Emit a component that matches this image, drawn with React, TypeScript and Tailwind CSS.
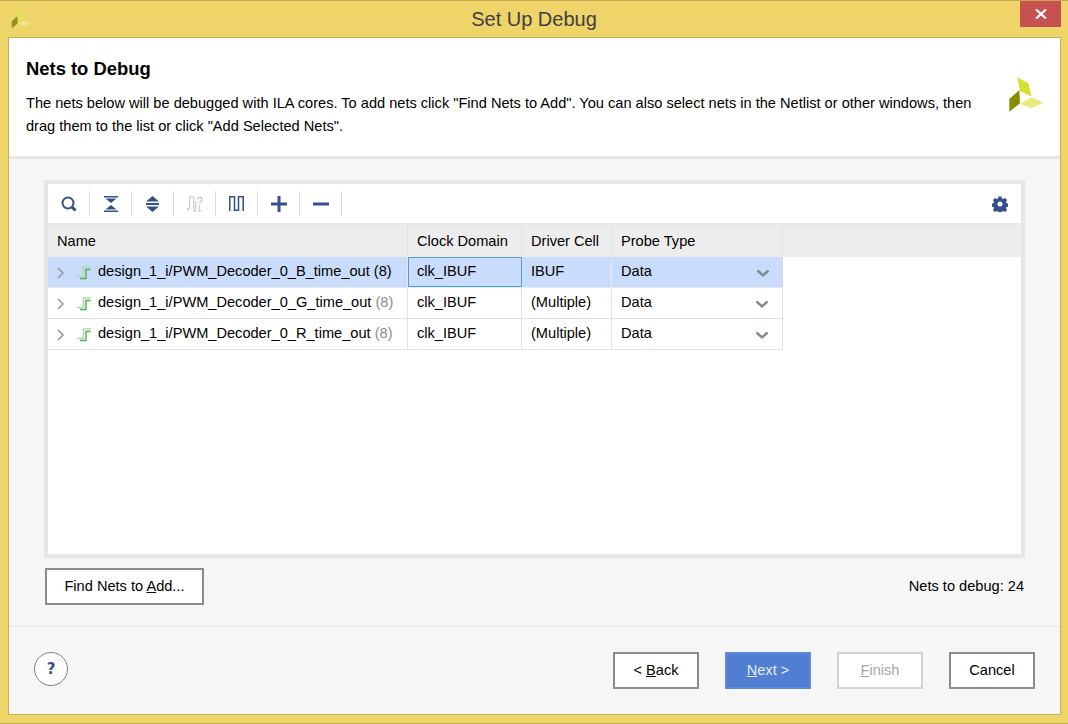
import React from "react";

const Sep = () => <div className="w-px h-[25px] bg-[#dcdcdc]" />;

const Tool = ({ children }: { children: React.ReactNode }) => (
  <div className="w-[41px] h-full flex items-center justify-center">{children}</div>
);

const blue = "#34508c";

const Chevron = () => (
  <svg width="8" height="12" viewBox="0 0 8 12" className="shrink-0 mt-[2px]">
    <path d="M1 1l5 5-5 5" fill="none" stroke="#999999" strokeWidth="1.6" />
  </svg>
);

const NetIcon = () => (
  <svg width="14" height="14" viewBox="0 0 14 14" className="shrink-0 mt-[2px]">
    <path d="M0 10.500h6.500V1H14" fill="none" stroke="#aedba6" strokeWidth="1.600" />
    <path d="M3 12.500h6V3.500h4.500" fill="none" stroke="#4eae55" strokeWidth="1.400" />
  </svg>
);

const Down = () => (
  <svg width="14" height="9" viewBox="0 0 14 9" className="mt-[3px]">
    <path d="M1.500 1.500L7 6.500l5.500-5" fill="none" stroke="#808a94" strokeWidth="2.400" />
  </svg>
);

const Logo = ({ size, fills }: { size: number; fills: [string, string, string] }) => (
  <svg width={size} height={size} viewBox="0 0 36 36">
    <path d="M9.300 0.300L20.300 6.300 23.700 19.700 12 13.700z" fill={fills[0]} />
    <path d="M1.300 22L11.300 13 12 26.300 1.300 34.700z" fill={fills[1]} />
    <path d="M12 27L23.700 20.300 35.300 25.700 23.700 31.300z" fill={fills[2]} />
  </svg>
);

const Btn = ({ children, w, cls }: { children: React.ReactNode; w: string; cls: string }) => (
  <div className={`${w} h-[37px] flex items-center justify-center border-2 ${cls}`}>{children}</div>
);

const rows = [
  { c: "G", d: "(Multiple)" },
  { c: "R", d: "(Multiple)" },
];

export default function App() {
  return (
    <div
      className="w-[1068px] h-[724px] flex flex-col bg-[#eed469] border-t border-b border-[#c4ab52] text-[14.6px] text-black overflow-hidden"
      style={{ fontFamily: '"Liberation Sans", Arial, sans-serif' }}
    >
      <div className="h-[36px] shrink-0 flex relative pl-[11px] pt-[8px]">
        <Logo size={20} fills={["#dfe05e", "#8f9413", "#e9e58c"]} />
        <div className="absolute inset-x-0 top-[5px] text-center text-[20px] leading-[26px] text-[#404040]">Set Up Debug</div>
        <div className="absolute right-[7px] top-0 w-[41px] h-[26px] bg-[#c75050] flex items-center justify-center">
          <svg width="12" height="10" viewBox="0 0 12 10">
            <path d="M1 0.500l10 9M11 0.500l-10 9" stroke="white" strokeWidth="2.200" />
          </svg>
        </div>
      </div>

      <div className="ml-[8px] mr-[7px] mb-[8px] flex-1 flex flex-col border border-[#c9b04f] bg-[#f6f6f6] min-h-0">
        <div className="h-[121px] shrink-0 bg-white border-b-[3px] border-[#e6e6e6] flex pl-[17px] pr-[16px] pt-[20px]">
          <div className="flex-1">
            <div className="font-bold text-[18.4px] leading-[21px]">Nets to Debug</div>
            <div className="mt-[13px] leading-[23px] w-[960px]">
              The nets below will be debugged with ILA cores. To add nets click "Find Nets to Add". You can also select nets in the Netlist or other windows, then drag them to the list or click "Add Selected Nets".
            </div>
          </div>
          <div className="pt-[19px]">
            <Logo size={36} fills={["#d6df2e", "#8a8a00", "#e6ec7c"]} />
          </div>
        </div>

        <div className="flex-1 flex flex-col px-[35px] pt-[21px] min-h-0">
          <div className="h-[378px] w-[981px] border-4 border-[#e6e6e6] bg-white flex flex-col">
            <div className="h-[42px] shrink-0 flex items-center border-b-[3px] border-[#e9e9e9]">
              <div className="w-[41px] h-full flex items-center justify-center">
                <svg width="18" height="18" viewBox="0 0 18 18">
                  <circle cx="8" cy="8" r="5.500" fill="none" stroke={blue} strokeWidth="2" />
                  <path d="M12 12l3.500 3.500" stroke={blue} strokeWidth="3" />
                </svg>
              </div>
              <Sep />
              <Tool>
                <svg width="14" height="16" viewBox="0 0 14 16">
                  <path d="M0 0h14v1.500H0zM0 14.500h14V16H0z" fill={blue} />
                  <path d="M1.500 2.500h11L7 7zM1.500 13.500h11L7 9z" fill={blue} />
                </svg>
              </Tool>
              <Sep />
              <Tool>
                <svg width="13" height="16" viewBox="0 0 13 16">
                  <path d="M6.500 0L13 5.500H0zM6.500 16L13 10.500H0z" fill={blue} />
                  <path d="M0 7h13v2H0z" fill={blue} />
                </svg>
              </Tool>
              <Sep />
              <Tool>
                <svg width="16" height="16" viewBox="0 0 16 16">
                  <path d="M0.700 15V12.500h2V1h4v14" fill="none" stroke="#cfcfcf" strokeWidth="1.300" />
                  <path d="M6.700 15h2V6M11 15h3M12.500 15V9" fill="none" stroke="#cfcfcf" strokeWidth="1.300" />
                  <path d="M10.500 3.500C10.500 0.500 15 0.500 15 3.500c0 2-2.500 2-2.500 3.500" fill="none" stroke="#cfcfcf" strokeWidth="1.500" />
                </svg>
              </Tool>
              <Sep />
              <Tool>
                <svg width="15" height="15" viewBox="0 0 15 15">
                  <path d="M0.800 15V0.800h4.700V14.200h4V0.800h4.700V15" fill="none" stroke={blue} strokeWidth="1.500" />
                </svg>
              </Tool>
              <Sep />
              <Tool>
                <svg width="16" height="16" viewBox="0 0 16 16">
                  <path d="M0 6.500h16v3H0zM6.500 0h3v16h-3z" fill={blue} />
                </svg>
              </Tool>
              <Sep />
              <Tool>
                <svg width="16" height="4" viewBox="0 0 16 4">
                  <path d="M0 0.500h16v3H0z" fill={blue} />
                </svg>
              </Tool>
              <Sep />
              <div className="flex-1" />
              <div className="pr-[13px] flex">
                <svg width="16" height="16" viewBox="0 0 16 16">
                  <path
                    fillRule="evenodd"
                    fill={blue}
                    d="M6.500 0.500h3l0.400 2 1.300 0.600 1.800-1 2 2-1 1.800 0.500 1.300 2 0.400v3l-2 0.400-0.500 1.300 1 1.800-2 2-1.800-1-1.300 0.500-0.400 2h-3l-0.400-2-1.300-0.500-1.800 1-2-2 1-1.800-0.500-1.300-2-0.400v-3l2-0.400 0.500-1.300-1-1.800 2-2 1.800 1 1.300-0.600zM8 5.500a2.500 2.500 0 1 0 0 5 2.500 2.500 0 0 0 0-5z"
                  />
                </svg>
              </div>
            </div>

            <div className="h-[31px] shrink-0 bg-[#ededed] flex leading-[31px]">
              <div className="w-[360px] pl-[9px] h-full border-r border-[#e0e0e0]">Name</div>
              <div className="w-[114px] pl-[9px] h-full border-r border-[#e0e0e0]">Clock Domain</div>
              <div className="w-[90px] pl-[9px] h-full border-r border-[#e0e0e0]">Driver Cell</div>
              <div className="w-[171px] pl-[9px] h-full border-r border-[#e0e0e0]">Probe Type</div>
            </div>

            <div className="w-[735px] flex h-[31px] bg-[#c9dcfb] border-b border-[#e3ebf5] leading-[28px]">
              <div className="w-[360px] h-full flex pl-[9px] items-center border-r border-[#e3ebf5]">
                <Chevron />
                <span className="w-[12px]" />
                <NetIcon />
                <span className="ml-[7px] h-full">design_1_i/PWM_Decoder_0_B_time_out (8)</span>
              </div>
              <div className="w-[114px] h-[30px] pl-[8px] border border-[#4d9fd3] leading-[26px]">clk_IBUF</div>
              <div className="w-[90px] h-full pl-[9px] border-r border-[#e3ebf5]">IBUF</div>
              <div className="w-[171px] h-full pl-[9px] pr-[13px] flex justify-between items-center">
                <span className="h-full">Data</span>
                <Down />
              </div>
            </div>

            {rows.map((r) => (
              <div key={r.c} className="w-[735px] flex h-[31px] border-b border-[#e3e3e3] leading-[28px]">
                <div className="w-[360px] h-full flex items-center pl-[9px] border-r border-[#e3e3e3]">
                  <Chevron />
                  <span className="w-[12px]" />
                  <NetIcon />
                  <span className="ml-[7px] h-full">
                    design_1_i/PWM_Decoder_0_{r.c}_time_out <span className="text-[#8c8c8c]">(8)</span>
                  </span>
                </div>
                <div className="w-[114px] h-full pl-[9px] border-r border-[#e3e3e3]">clk_IBUF</div>
                <div className="w-[90px] h-full pl-[9px] border-r border-[#e3e3e3]">{r.d}</div>
                <div className="w-[171px] h-full pl-[9px] pr-[13px] flex justify-between items-center border-r border-[#e3e3e3]">
                  <span className="h-full">Data</span>
                  <Down />
                </div>
              </div>
            ))}
          </div>

          <div className="mt-[10px] ml-px w-[980px] flex items-start justify-between">
            <Btn w="w-[159px]" cls="bg-white border-[#8c8c8c]">
              <span>
                Find Nets to <u>A</u>dd...
              </span>
            </Btn>
            <div className="pt-[8px] pr-[1px] leading-[20px]">Nets to debug: 24</div>
          </div>
        </div>

        <div className="h-[88px] shrink-0 border-t border-[#e6e6e6] flex items-start pl-[25px] pr-[25px] pt-[25px]">
          <div
            className="w-[34px] h-[34px] rounded-full border border-[#808080] bg-white flex items-center justify-center font-bold text-[15px] text-[#34508c]"
            style={{ fontFamily: '"DejaVu Sans", sans-serif' }}
          >
            ?
          </div>
          <div className="flex-1" />
          <div className="flex gap-[26px]">
            <Btn w="w-[86px]" cls="bg-white border-[#8c8c8c]">
              <span>
                &lt; <u>B</u>ack
              </span>
            </Btn>
            <Btn w="w-[86px]" cls="bg-[#4f7ed3] border-[#5f8ada] text-[#e8eefa]">
              <span>
                <u>N</u>ext &gt;
              </span>
            </Btn>
            <Btn w="w-[86px]" cls="bg-white border-[#d2d2d2] text-[#a6a6a6]">
              <span>
                <u>F</u>inish
              </span>
            </Btn>
            <Btn w="w-[86px]" cls="bg-white border-[#8c8c8c]">
              <span>Cancel</span>
            </Btn>
          </div>
        </div>
      </div>
    </div>
  );
}
